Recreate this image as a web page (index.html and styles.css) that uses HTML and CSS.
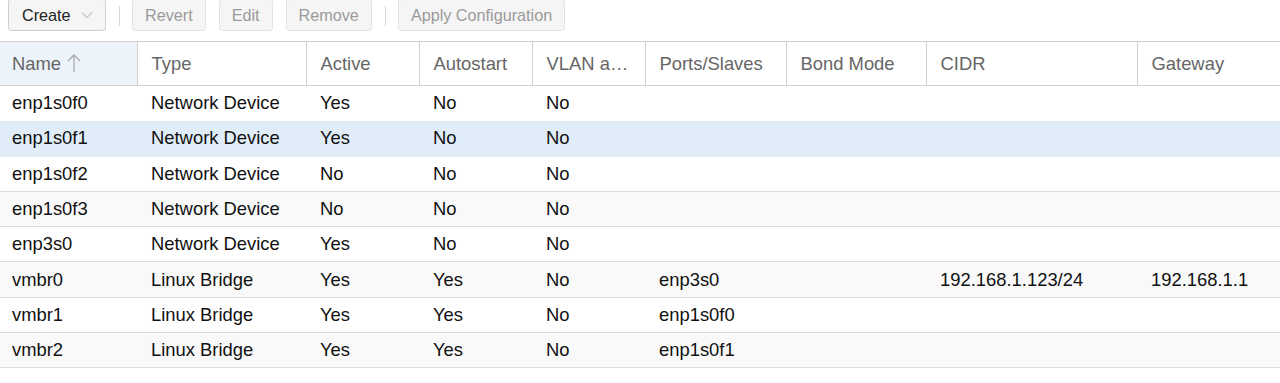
FILE: index.html
```html
<!DOCTYPE html>
<html>
  <head>
    <title>Network</title>
    <link rel="stylesheet" href="styles.css">
  </head>
  <body>

    <div class="toolbar">
      <button class="tb-btn tb-create">Create
        <svg class="chevron" width="12" height="8" viewBox="0 0 12 8"><path d="M1 1.5 L6 6.5 L11 1.5" fill="none" stroke="#c4c4c4" stroke-width="1.1"/></svg>
      </button>
      <span class="tb-sep"></span>
      <button class="tb-btn" disabled>Revert</button>
      <button class="tb-btn" disabled>Edit</button>
      <button class="tb-btn" disabled>Remove</button>
      <span class="tb-sep"></span>
      <button class="tb-btn" disabled>Apply Configuration</button>
    </div>

    <table class="grid">
      <colgroup>
        <col style="width:137px">
        <col style="width:169px">
        <col style="width:113px">
        <col style="width:113px">
        <col style="width:113px">
        <col style="width:141px">
        <col style="width:140px">
        <col style="width:211px">
        <col>
      </colgroup>
      <thead>
        <tr>
          <th class="sorted">Name
            <svg class="sort-arrow" width="14" height="20" viewBox="0 0 14 20"><path d="M7 19 V2 M1 8 L7 2 L13 8" fill="none" stroke="#aaa" stroke-width="1.3"/></svg>
          </th>
          <th>Type</th>
          <th>Active</th>
          <th>Autostart</th>
          <th>VLAN a…</th>
          <th>Ports/Slaves</th>
          <th>Bond Mode</th>
          <th>CIDR</th>
          <th>Gateway</th>
        </tr>
      </thead>
      <tbody>
        <tr><td>enp1s0f0</td><td>Network Device</td><td>Yes</td><td>No</td><td>No</td><td></td><td></td><td></td><td></td></tr>
        <tr class="selected"><td>enp1s0f1</td><td>Network Device</td><td>Yes</td><td>No</td><td>No</td><td></td><td></td><td></td><td></td></tr>
        <tr><td>enp1s0f2</td><td>Network Device</td><td>No</td><td>No</td><td>No</td><td></td><td></td><td></td><td></td></tr>
        <tr><td>enp1s0f3</td><td>Network Device</td><td>No</td><td>No</td><td>No</td><td></td><td></td><td></td><td></td></tr>
        <tr><td>enp3s0</td><td>Network Device</td><td>Yes</td><td>No</td><td>No</td><td></td><td></td><td></td><td></td></tr>
        <tr><td>vmbr0</td><td>Linux Bridge</td><td>Yes</td><td>Yes</td><td>No</td><td>enp3s0</td><td></td><td>192.168.1.123/24</td><td>192.168.1.1</td></tr>
        <tr><td>vmbr1</td><td>Linux Bridge</td><td>Yes</td><td>Yes</td><td>No</td><td>enp1s0f0</td><td></td><td></td><td></td></tr>
        <tr><td>vmbr2</td><td>Linux Bridge</td><td>Yes</td><td>Yes</td><td>No</td><td>enp1s0f1</td><td></td><td></td><td></td></tr>
      </tbody>
    </table>

  </body>
</html>
```

FILE: styles.css
```css
body, html {
  margin: 0;
  background-color: #fff;
}

body {
  font-family: "Liberation Sans", Arial, sans-serif;
  overflow: hidden;
}

/* Toolbar */

.toolbar {
  display: flex;
  align-items: flex-start;
  height: 41px;
  padding: 0 0 0 8px;
  box-sizing: border-box;
}

.tb-btn {
  font-family: inherit;
  font-size: 16.2px;
  height: 32px;
  margin-top: -1px;
  padding: 0 12px;
  margin-right: 13px;
  background-color: #f5f5f5;
  border: 1px solid #e3e3e3;
  border-radius: 3px;
  color: #9a9a9a;
  display: flex;
  align-items: center;
}

.tb-create {
  color: #222;
  border-color: #cfcfcf;
  padding: 0 10px 0 13px;
  width: 98px;
}

.chevron {
  margin-left: 10px;
}

.tb-sep {
  width: 1px;
  height: 20px;
  margin: 6px 12px 0 0;
  background-color: #d6d6d6;
}

/* Grid */

.grid {
  width: 100%;
  border-collapse: collapse;
  table-layout: fixed;
  font-size: 18.4px;
}

.grid th {
  height: 44px;
  padding: 0 0 0 14px;
  text-align: left;
  font-weight: normal;
  color: #666;
  border-top: 1px solid #d0d0d0;
  border-bottom: 1px solid #d0d0d0;
  border-left: 1px solid #d0d0d0;
  white-space: nowrap;
  box-sizing: border-box;
}

.grid th:first-child {
  border-left: none;
  padding-left: 12px;
}

.grid th.sorted {
  background-color: #ecf3fa;
}

.sort-arrow {
  vertical-align: -3px;
  margin-left: 1px;
}

.grid td {
  height: 34.3px;
  padding: 0 0 0 14px;
  color: #111;
  white-space: nowrap;
  border-bottom: 1px solid #dcdcdc;
}

.grid td:first-child {
  padding-left: 12px;
}

.grid tbody tr:nth-child(even) td {
  background-color: #f9f9f9;
}

.grid tbody tr.selected td {
  background-color: #e0edf8;
  border-bottom-color: #e0edf8;
}

.grid tbody tr:first-child td {
  border-bottom-color: #fff;
}
```
